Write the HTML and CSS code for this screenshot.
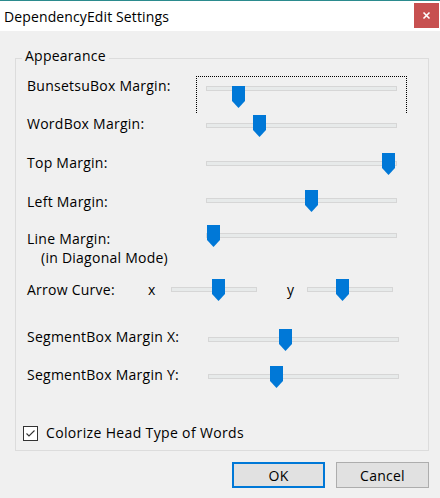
FILE: index.html
```html
<!DOCTYPE html>
<html>
<head>
<meta charset="utf-8">
<title>DependencyEdit Settings</title>
<link rel="stylesheet" href="styles.css">
</head>
<body>
<div class="window">
  <div class="titlebar">
    <span class="title">DependencyEdit Settings</span>
    <button class="close" aria-label="Close"><svg width="25" height="25" viewBox="0 0 25 25"><path d="M9.5 9.5 L15.5 15.5 M15.5 9.5 L9.5 15.5" stroke="#fff" stroke-width="1.6" fill="none"/></svg></button>
  </div>
  <div class="content">
    <div class="group">
      <div class="legend">Appearance</div>
      <div class="rows">
        <div class="row">
          <span class="label label-focus">BunsetsuBox Margin:</span>
          <div class="focus">
            <div class="slider"><div class="track"></div><div class="thumb" style="left:26px"></div></div>
          </div>
        </div>
        <div class="row">
          <span class="label">WordBox Margin:</span>
          <div class="slider off-1"><div class="track"></div><div class="thumb" style="left:47px"></div></div>
        </div>
        <div class="row">
          <span class="label">Top Margin:</span>
          <div class="slider"><div class="track"></div><div class="thumb" style="left:176px"></div></div>
        </div>
        <div class="row">
          <span class="label">Left Margin:</span>
          <div class="slider off-m2"><div class="track"></div><div class="thumb" style="left:99px"></div></div>
        </div>
        <div class="row">
          <span class="label">Line Margin:<br><span class="sub">(in Diagonal Mode)</span></span>
          <div class="slider off-m4"><div class="track"></div><div class="thumb" style="left:1px"></div></div>
        </div>
        <div class="row">
          <span class="label label-arrow">Arrow Curve:</span>
          <span class="axis">x</span>
          <div class="slider short off-m1"><div class="track"></div><div class="thumb" style="left:41px"></div></div>
          <span class="axis axis-y">y</span>
          <div class="slider short off-m1"><div class="track"></div><div class="thumb" style="left:29px"></div></div>
        </div>
        <div class="row">
          <span class="label label-wide">SegmentBox Margin X:</span>
          <div class="slider off-2"><div class="track"></div><div class="thumb" style="left:71px"></div></div>
        </div>
        <div class="row">
          <span class="label label-wide">SegmentBox Margin Y:</span>
          <div class="slider off-1"><div class="track"></div><div class="thumb" style="left:62px"></div></div>
        </div>
      </div>
      <label class="check">
        <span class="box"><svg width="13" height="13" viewBox="0 0 13 13"><path d="M2.5 6.5 L5 9 L10.5 3.5" stroke="#333" stroke-width="1.1" fill="none"/></svg></span>
        <span class="check-text">Colorize Head Type of Words</span>
      </label>
    </div>
    <div class="buttons">
      <button class="btn btn-default">OK</button>
      <button class="btn">Cancel</button>
    </div>
  </div>
</div>
</body>
</html>
```
FILE: styles.css
```css
html, body {
  margin: 0;
  padding: 0;
}
body {
  font-family: "Open Sans", "Noto Sans", sans-serif;
  font-size: 14px;
  line-height: 19px;
  letter-spacing: 0.25px;
  color: #000;
  background: #f0f0f0;
}
.window {
  width: 440px;
  height: 498px;
  background: #f0f0f0;
  overflow: hidden;
}
.titlebar {
  height: 30px;
  border-top: 1px solid #2b8b8e;
  background: #fff;
  display: flex;
  align-items: flex-start;
  justify-content: space-between;
}
.title {
  padding: 6px 0 0 4px;
  letter-spacing: 0.12px;
}
.close {
  width: 25px;
  height: 25px;
  margin: 2px 1px 0 0;
  padding: 0;
  border: none;
  background: #c75050;
  display: block;
}
.close svg { display: block; }
.content {
  padding: 27px 11px 0 15px;
}
.group {
  border: 1px solid #dcdcdc;
  padding: 0 0 8px 0;
}
.legend {
  width: max-content;
  margin: -13px 0 0 6px;
  padding: 0 3px;
  background: #f0f0f0;
}
.rows {
  margin-top: 11px;
  padding-left: 11px;
  display: grid;
  grid-template-rows: 38px 39px 39px 37px 51px 47px 38px 38px;
}
.row {
  display: flex;
  align-items: flex-start;
}
.label {
  flex: none;
  width: 179px;
  white-space: nowrap;
}
.label-focus { width: 169px; }
.label-wide { width: 181px; }
.label-arrow { width: 121px; }
.sub { padding-left: 14px; }
.axis {
  flex: none;
  width: 23px;
}
.axis-y {
  width: 20px;
  margin-left: 30px;
}
.focus {
  width: 191px;
  height: 35px;
  padding: 1px 9px 0;
  border: 1px dotted #000;
  border-bottom: none;
}
.slider {
  position: relative;
  flex: none;
  width: 191px;
  height: 23px;
}
.slider.short { width: 86px; }
.off-1 { margin-top: 1px; }
.off-2 { margin-top: 2px; }
.off-m1 { margin-top: -1px; }
.off-m2 { margin-top: -2px; }
.off-m4 { margin-top: -4px; }
.track {
  box-sizing: border-box;
  height: 5px;
  margin-top: 8px;
  background: #e7eaea;
  border: 1px solid #d6d6d6;
}
.thumb {
  position: absolute;
  top: 0;
  width: 13px;
  height: 22px;
  background: #0078d7;
  clip-path: polygon(0 0, 100% 0, 100% 15px, 50% 100%, 0 15px);
}
.check {
  display: flex;
  align-items: center;
  margin-top: 20px;
  padding-left: 7px;
}
.check-text { letter-spacing: 0.35px; }
.box {
  box-sizing: border-box;
  width: 15px;
  height: 15px;
  border: 1px solid #333;
  background: #fff;
  margin: 1px 8px 0 0;
  display: flex;
  align-items: center;
  justify-content: center;
}
.box svg { display: block; }
.buttons {
  display: flex;
  justify-content: flex-end;
  gap: 11px;
  margin-top: 11px;
}
.btn {
  box-sizing: border-box;
  width: 93px;
  height: 26px;
  padding: 0;
  font-family: "Open Sans", "Noto Sans", sans-serif;
  font-size: 14px;
  letter-spacing: 0.25px;
  color: #000;
  background: #e1e1e1;
  border: 1px solid #adadad;
}
.btn-default {
  border: 2px solid #0078d7;
}
```
